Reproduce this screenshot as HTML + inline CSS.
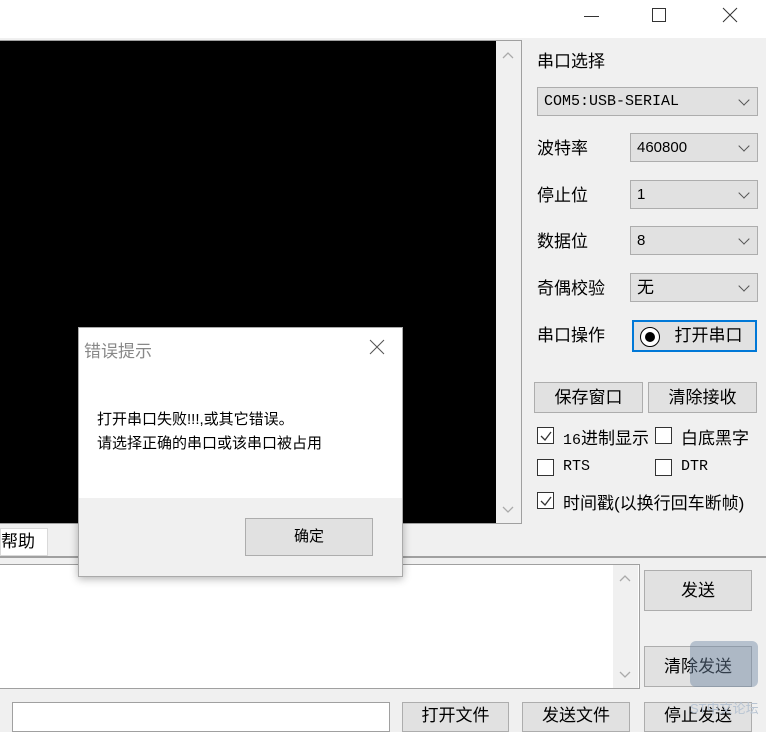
<!DOCTYPE html>
<html><head><meta charset="utf-8"><style>
*{margin:0;padding:0;box-sizing:border-box}
body{width:766px;height:724px;overflow:hidden;background:#f0f0f0;position:relative;font-family:"Liberation Sans","Noto Sans CJK SC",sans-serif;font-size:17px;color:#000}
.a{position:absolute}
.combo{position:absolute;background:#e1e1e1;border:1px solid #adadad;font-size:15px;padding-left:6px;line-height:28px}
.combo:after{content:"";position:absolute;right:9px;top:8px;width:7px;height:7px;border-right:1.3px solid #555;border-bottom:1.3px solid #555;transform:rotate(45deg)}
.btn{position:absolute;background:#e1e1e1;border:1px solid #adadad;text-align:center;font-size:17px}
.cb{position:absolute;width:17px;height:17px;border:1px solid #333;background:#fff}
.mono{font-family:"Liberation Mono","Noto Sans CJK SC",monospace}
</style></head><body>
<div class="a" style="left:0;top:0;width:766px;height:38px;background:#fff"></div>
<div class="a" style="left:584px;top:16px;width:15px;height:1px;background:#333"></div>
<div class="a" style="left:652px;top:8px;width:14px;height:14px;border:1px solid #333"></div>
<svg class="a" style="left:722px;top:7px" width="16" height="16"><path d="M1 1L15 15M15 1L1 15" stroke="#333" stroke-width="1"/></svg>

<div class="a" style="left:0;top:40px;width:522px;height:484px;border:1px solid #a0a0a0;border-left:none;background:#f0f0f0"></div>
<div class="a" style="left:0;top:41px;width:496px;height:482px;background:#000"></div>
<svg class="a" style="left:501px;top:50px" width="14" height="10"><path d="M2 8L7 3L12 8" stroke="#aaa" fill="none" stroke-width="1.3"/></svg>
<svg class="a" style="left:501px;top:505px" width="14" height="10"><path d="M2 2L7 7L12 2" stroke="#aaa" fill="none" stroke-width="1.3"/></svg>

<div class="a" style="left:537px;top:47px">串口选择</div>
<div class="combo mono" style="left:537px;top:87px;width:221px;height:29px">COM5:USB-SERIAL</div>
<div class="a" style="left:537px;top:134px">波特率</div>
<div class="combo" style="left:630px;top:133px;width:128px;height:29px">460800</div>
<div class="a" style="left:537px;top:181px">停止位</div>
<div class="combo" style="left:630px;top:180px;width:128px;height:29px">1</div>
<div class="a" style="left:537px;top:227px">数据位</div>
<div class="combo" style="left:630px;top:226px;width:128px;height:29px">8</div>
<div class="a" style="left:537px;top:274px">奇偶校验</div>
<div class="combo" style="left:630px;top:273px;width:128px;height:29px;font-size:17px">无</div>
<div class="a" style="left:537px;top:321px">串口操作</div>
<div class="btn" style="left:632px;top:320px;width:125px;height:32px;border:2px solid #0078d7;line-height:27px;padding-left:28px">打开串口</div>
<div class="a" style="left:640px;top:327px;width:20px;height:20px;border-radius:50%;border:1.5px solid #000;background:#fff"></div>
<div class="a" style="left:645px;top:332px;width:10px;height:10px;border-radius:50%;background:#000"></div>

<div class="btn" style="left:534px;top:382px;width:109px;height:31px;line-height:29px">保存窗口</div>
<div class="btn" style="left:648px;top:382px;width:109px;height:31px;line-height:29px">清除接收</div>
<div class="cb" style="left:537px;top:427px"></div><svg class="a" style="left:539px;top:429px" width="14" height="14"><path d="M2 7L6 11L12 3" stroke="#333" fill="none" stroke-width="1.3"/></svg>
<div class="a" style="left:563px;top:424px"><span class="mono" style="font-size:15px">16</span>进制显示</div>
<div class="cb" style="left:655px;top:427px"></div>
<div class="a" style="left:681px;top:424px">白底黑字</div>
<div class="cb" style="left:537px;top:459px"></div><div class="a mono" style="left:563px;top:458px;font-size:15px">RTS</div>
<div class="cb" style="left:655px;top:459px"></div><div class="a mono" style="left:681px;top:458px;font-size:15px">DTR</div>
<div class="cb" style="left:537px;top:492px"></div><svg class="a" style="left:539px;top:494px" width="14" height="14"><path d="M2 7L6 11L12 3" stroke="#333" fill="none" stroke-width="1.3"/></svg>
<div class="a" style="left:563px;top:489px">时间戳(以换行回车断帧)</div>

<div class="a" style="left:0;top:528px;width:48px;height:28px;background:#fff;border:1px solid #d9d9d9;line-height:26px">帮助</div>
<div class="a" style="left:0;top:556px;width:766px;height:2px;background:#a0a0a0"></div>
<div class="a" style="left:0;top:564px;width:640px;height:125px;border:1px solid #a0a0a0;border-left:none;background:#fff"></div>
<div class="a" style="left:613px;top:565px;width:25px;height:123px;background:#f0f0f0"></div>
<svg class="a" style="left:618px;top:573px" width="14" height="10"><path d="M2 8L7 3L12 8" stroke="#aaa" fill="none" stroke-width="1.3"/></svg>
<svg class="a" style="left:618px;top:670px" width="14" height="10"><path d="M2 2L7 7L12 2" stroke="#aaa" fill="none" stroke-width="1.3"/></svg>
<div class="btn" style="left:644px;top:570px;width:108px;height:41px;line-height:39px">发送</div>
<div class="btn" style="left:644px;top:646px;width:108px;height:41px;line-height:39px">清除发送</div>
<div class="a" style="left:690px;top:641px;width:68px;height:46px;background:rgba(110,135,165,0.45);border-radius:6px"></div>

<div class="a" style="left:12px;top:702px;width:378px;height:30px;background:#fff;border:1px solid #a0a0a0"></div>
<div class="btn" style="left:402px;top:702px;width:107px;height:30px;line-height:26px">打开文件</div>
<div class="btn" style="left:522px;top:702px;width:108px;height:30px;line-height:26px">发送文件</div>
<div class="btn" style="left:644px;top:702px;width:108px;height:30px;line-height:26px">停止发送</div>
<div class="a" style="left:690px;top:698px;font-size:13px;color:#b8c4d2">ST中文论坛</div>

<div class="a" style="left:78px;top:327px;width:325px;height:250px;background:#fff;border:1px solid #aaa;box-shadow:0 2px 8px rgba(0,0,0,0.3)">
<div class="a" style="left:5px;top:9px;color:#888;font-size:17px">错误提示</div>
<svg class="a" style="left:290px;top:11px" width="16" height="16"><path d="M1 1L15 15M15 1L1 15" stroke="#555" stroke-width="1"/></svg>
<div class="a" style="left:18px;top:80px;font-size:15px;line-height:24px">打开串口失败!!!,或其它错误。<br>请选择正确的串口或该串口被占用</div>
<div class="a" style="left:0;top:170px;width:323px;height:78px;background:#f0f0f0"></div>
<div class="btn" style="left:166px;top:190px;width:128px;height:38px;line-height:36px;font-size:15px">确定</div>
</div>
</body></html>
